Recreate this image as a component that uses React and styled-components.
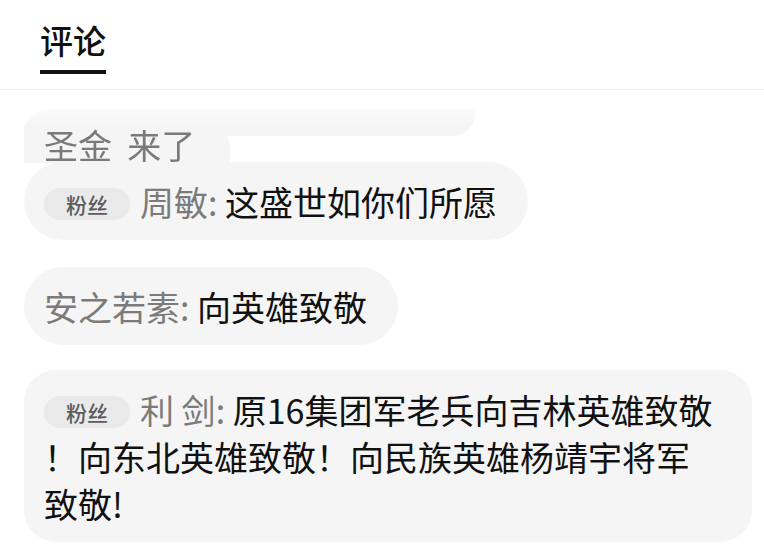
import React from "react";
import styled, { createGlobalStyle } from "styled-components";

const GlobalStyle = createGlobalStyle`
  html, body {
    margin: 0;
    padding: 0;
    background: #ffffff;
    font-family: "Noto Sans CJK SC", "Noto Sans", sans-serif;
  }
`;

const Page = styled.div`
  width: 764px;
  height: 554px;
  overflow: hidden;
  background: #fff;
`;

const Header = styled.div`
  height: 90px;
  padding-left: 40px;
  border-bottom: 1px solid #efefef;
  box-sizing: border-box;
  display: flex;
  align-items: flex-start;
`;

const Tab = styled.div`
  display: flex;
  flex-direction: column;
  align-items: stretch;
  padding-top: 22px;
`;

const TabLabel = styled.span`
  font-size: 33px;
  line-height: 36px;
  font-weight: 500;
  color: #111;
`;

const TabLine = styled.div`
  height: 4px;
  margin-top: 12px;
  background: #111;
`;

const List = styled.div`
  display: flex;
  flex-direction: column;
  align-items: flex-start;
  padding: 19px 12px 0 24px;
`;

/* the comment scrolling out of view under the header, faded at its top */
const FadedComment = styled.div`
  margin-bottom: -1px;
  display: flex;
  flex-direction: column;
  align-items: flex-start;
  -webkit-mask-image: linear-gradient(to bottom, rgba(0, 0, 0, 0.35) 0, #000 16px);
  mask-image: linear-gradient(to bottom, rgba(0, 0, 0, 0.35) 0, #000 16px);
`;

const PrevLine = styled.div`
  flex-shrink: 0;
  width: 451px;
  height: 27px;
  background: #f5f5f5;
  border-radius: 24px 0 22px 0;
`;

const LastLine = styled.div`
  flex-shrink: 0;
  margin-top: -9px;
  padding: 0 35px 0 20px;
  background: #f5f5f5;
  border-radius: 0 20px 0 0;
  font-size: 34px;
  line-height: 36px;
  color: #7a7a7a;
  white-space: pre;
`;

const Bubble = styled.div`
  position: relative;
  box-sizing: border-box;
  margin-top: ${(p) => p.$gap || 0}px;
  padding: 16px ${(p) => p.$right || 31}px 15px 20px;
  background: #f5f5f5;
  border-radius: ${(p) => p.$radius || 39}px;
  font-size: 34px;
  line-height: 47px;
  color: #111;
  white-space: nowrap;
  ${(p) => p.$full && "align-self: stretch;"}
`;

const Badge = styled.span`
  display: inline-block;
  vertical-align: middle;
  width: 86px;
  height: 32px;
  margin: -6px 10px 0 0;
  border-radius: 16px;
  background: #eaeaea;
  color: #5c5c5c;
  font-size: 21px;
  font-weight: 500;
  line-height: 32px;
  text-align: center;
`;

const Name = styled.span`
  color: #7b7b7b;
`;

const comments = [
  { id: 1, fan: true, name: "周敏", text: ["这盛世如你们所愿"], gap: 0 },
  { id: 2, fan: false, name: "安之若素", text: ["向英雄致敬"], gap: 27 },
  {
    id: 3,
    fan: true,
    name: "利 剑",
    text: [
      "原16集团军老兵向吉林英雄致敬",
      "！向东北英雄致敬！向民族英雄杨靖宇将军",
      "致敬!",
    ],
    gap: 25,
    full: true,
  },
];

const App = () => {
  return (
    <Page>
      <GlobalStyle />
      <Header>
        <Tab>
          <TabLabel>评论</TabLabel>
          <TabLine />
        </Tab>
      </Header>
      <List>
        <FadedComment>
          <PrevLine />
          <LastLine>圣金  来了</LastLine>
        </FadedComment>
        {comments.map((c) => (
          <Bubble
            key={c.id}
            $gap={c.gap}
            $full={c.full}
            $radius={c.full ? 32 : 39}
            $right={c.full ? 20 : 31}
          >
            {c.fan && <Badge>粉丝</Badge>}
            <Name>{c.name}: </Name>
            {c.text.map((line, i) => (
              <React.Fragment key={i}>
                {i > 0 && <br />}
                {line}
              </React.Fragment>
            ))}
          </Bubble>
        ))}
      </List>
    </Page>
  );
};

export default App;
